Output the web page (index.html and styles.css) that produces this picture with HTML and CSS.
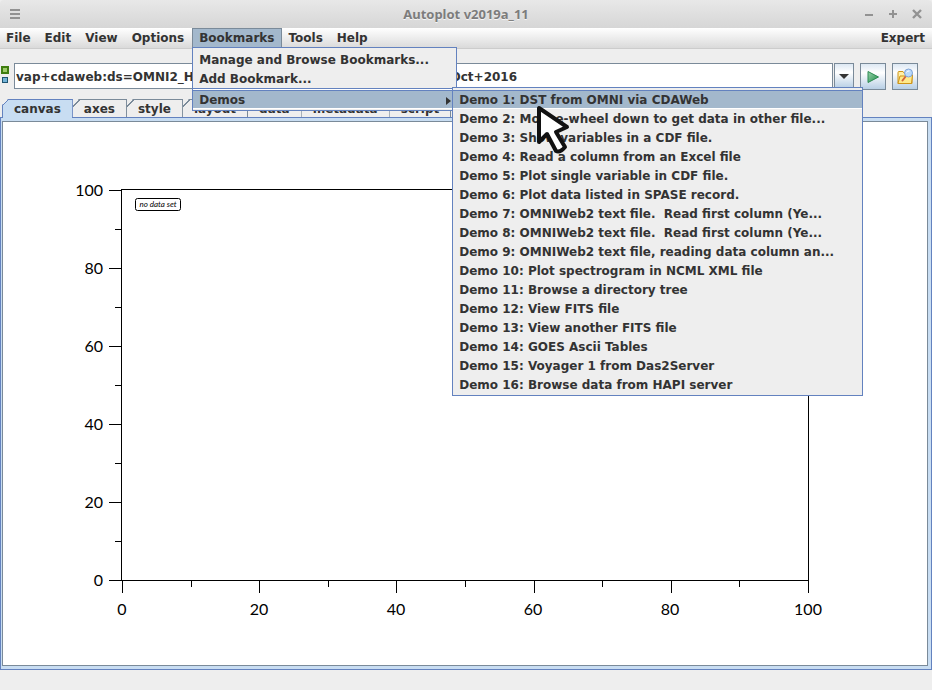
FILE: index.html
```html
<!DOCTYPE html>
<html lang="en">
<head>
    <meta charset="UTF-8">
    <meta name="viewport" content="width=device-width, initial-scale=1.0">
    <title>Autoplot v2019a_11</title>
    <link rel="stylesheet" href="styles.css">
</head>
<body>

<header class="titlebar">
    <button class="title-button" aria-label="Window menu">
        <svg width="12" height="12" viewBox="0 0 12 12"><path d="M1 2h10M1 6h10M1 10h10" stroke="#929292" stroke-width="2"/></svg>
    </button>
    <h1>Autoplot v2019a_11</h1>
    <div class="title-actions">
        <button class="title-button" aria-label="Minimize">
            <svg width="12" height="12" viewBox="0 0 12 12"><path d="M2 7h8" stroke="#929292" stroke-width="2"/></svg>
        </button>
        <button class="title-button" aria-label="Maximize">
            <svg width="12" height="12" viewBox="0 0 12 12"><path d="M2 6h8M6 2v8" stroke="#929292" stroke-width="2"/></svg>
        </button>
        <button class="title-button" aria-label="Close">
            <svg width="12" height="12" viewBox="0 0 12 12"><path d="M2 2l8 8M10 2l-8 8" stroke="#929292" stroke-width="2.4"/></svg>
        </button>
    </div>
</header>

<nav class="menubar">
    <button class="menu-button">File</button>
    <button class="menu-button">Edit</button>
    <button class="menu-button">View</button>
    <button class="menu-button">Options</button>
    <div class="menu-holder">
        <button class="menu-button open">Bookmarks</button>
        <div class="popup">
            <button class="item">Manage and Browse Bookmarks...</button>
            <button class="item">Add Bookmark...</button>
            <hr>
            <div class="submenu-holder">
                <button class="item selected">Demos
                    <svg class="arrow" width="5" height="8" viewBox="0 0 5 8"><path d="M0 0l5 4-5 4z" fill="#333"/></svg>
                </button>
                <div class="popup submenu">
                    <button class="item selected">Demo 1: DST from OMNI via CDAWeb</button>
                    <button class="item">Demo 2: Mouse-wheel down to get data in other file...</button>
                    <button class="item">Demo 3: Show variables in a CDF file.</button>
                    <button class="item">Demo 4: Read a column from an Excel file</button>
                    <button class="item">Demo 5: Plot single variable in CDF file.</button>
                    <button class="item">Demo 6: Plot data listed in SPASE record.</button>
                    <button class="item">Demo 7: OMNIWeb2 text file.&nbsp; Read first column (Ye...</button>
                    <button class="item">Demo 8: OMNIWeb2 text file.&nbsp; Read first column (Ye...</button>
                    <button class="item">Demo 9: OMNIWeb2 text file, reading data column an...</button>
                    <button class="item">Demo 10: Plot spectrogram in NCML XML file</button>
                    <button class="item">Demo 11: Browse a directory tree</button>
                    <button class="item">Demo 12: View FITS file</button>
                    <button class="item">Demo 13: View another FITS file</button>
                    <button class="item">Demo 14: GOES Ascii Tables</button>
                    <button class="item">Demo 15: Voyager 1 from Das2Server</button>
                    <button class="item">Demo 16: Browse data from HAPI server</button>
                    <svg class="cursor" width="36" height="52" viewBox="0 0 36 52"><path d="M3 3V37L11 29L20 46Q24 48 29 42L20 27L31 22Z" fill="#fff" stroke="#111" stroke-width="4" stroke-linejoin="round"/></svg>
                </div>
            </div>
        </div>
    </div>
    <button class="menu-button">Tools</button>
    <button class="menu-button">Help</button>
    <button class="menu-button expert">Expert</button>
</nav>

<div class="toolbar">
    <div class="source-icon">
        <span class="square green"></span>
        <span class="square blue"></span>
    </div>
    <input class="address" type="text" aria-label="Data address" value="vap+cdaweb:ds=OMNI2_H0_MRG1HR&amp;id=DST1800&amp;timerange=Oct+2016">
    <button class="tool-button recent" aria-label="Recent addresses">
        <svg width="10" height="5" viewBox="0 0 10 5"><path d="M0 0h10L5 5z" fill="#333"/></svg>
    </button>
    <button class="tool-button" aria-label="Plot">
        <svg width="16" height="16" viewBox="0 0 16 16">
            <defs><linearGradient id="go" x1="0" y1="0" x2="1" y2="1"><stop offset="0" stop-color="#9bd3ad"/><stop offset="1" stop-color="#1d8c48"/></linearGradient></defs>
            <path d="M3 2.500L13.500 8L3 13.500z" fill="url(#go)" stroke="#2c8b52" stroke-linejoin="round"/>
        </svg>
    </button>
    <button class="tool-button" aria-label="Inspect file">
        <svg width="18" height="18" viewBox="0 0 18 18">
            <path d="M2 15.500V4.500q0-1 1-1h4l1.500 2H15q1 0 1 1v9z" fill="#fff0a8" stroke="#cf9418"/>
            <path d="M2 15.500L4 8h5l1-1h6.500l-1 8.500z" fill="#ffe98a" stroke="#cf9418"/>
            <path d="M10 8L6.500 12.500" stroke="#d3643b" stroke-width="2" stroke-linecap="round"/>
            <circle cx="12.500" cy="5" r="4" fill="#b9dafa" stroke="#7fa3d6"/>
            <path d="M10.500 4.500q1-2 3-1.500" fill="none" stroke="#fff"/>
        </svg>
    </button>
</div>

<div class="tabs" role="tablist">
    <button class="tab active" role="tab">canvas</button>
    <button class="tab" role="tab">axes</button>
    <button class="tab" role="tab">style</button>
    <button class="tab" role="tab">layout</button>
    <button class="tab" role="tab">data</button>
    <button class="tab" role="tab">metadata</button>
    <button class="tab" role="tab">script</button>
</div>

<main class="panel">
    <div class="canvas">
        <svg class="plot" width="924" height="540" viewBox="3 122 924 540">
            <g fill="none" stroke="#000" shape-rendering="crispEdges">
                <path d="M121.500 189.500H808.500V580.500H121.500Z"/>
                <path d="M109 190.500h12M109 268.500h12M109 346.500h12M109 424.500h12M109 502.500h12M109 580.500h12"/>
                <path d="M115 229.500h6M115 307.500h6M115 385.500h6M115 463.500h6M115 541.500h6"/>
                <path d="M122.500 581v12M259.500 581v12M396.500 581v12M534.500 581v12M671.500 581v12M808.500 581v12"/>
                <path d="M191.500 581v6M328.500 581v6M465.500 581v6M602.500 581v6M739.500 581v6"/>
            </g>
            <g class="labels y-labels">
                <text x="103" y="196">100</text>
                <text x="103" y="274">80</text>
                <text x="103" y="352">60</text>
                <text x="103" y="430">40</text>
                <text x="103" y="508">20</text>
                <text x="103" y="586">0</text>
            </g>
            <g class="labels x-labels">
                <text x="122" y="615">0</text>
                <text x="259" y="615">20</text>
                <text x="396" y="615">40</text>
                <text x="533" y="615">60</text>
                <text x="670" y="615">80</text>
                <text x="808" y="615">100</text>
            </g>
            <rect x="135.500" y="198.500" width="45" height="12" rx="2" fill="#fff" stroke="#000"/>
            <text class="message" x="158" y="207">no data set</text>
        </svg>
    </div>
</main>

<footer class="statusbar"></footer>

</body>
</html>
```
FILE: styles.css
```css
* {
    box-sizing: border-box;
}
body {
    margin: 0;
    height: 100vh;
    display: flex;
    flex-direction: column;
    overflow: hidden;
    background: #eee;
    color: #333;
    font: bold 12px/19px "DejaVu Sans", sans-serif;
}
button {
    margin: 0;
    padding: 0;
    border: 0;
    background: none;
    color: inherit;
    font: inherit;
}
svg {
    display: block;
}
.titlebar {
    flex: none;
    display: flex;
    align-items: center;
    justify-content: space-between;
    height: 28px;
    padding: 0 9px;
    background: linear-gradient(#e8e8e8, #d6d6d6);
    border-radius: 4px 4px 0 0;
}
.titlebar h1 {
    flex: 1;
    margin: 0 0 0 48px;
    text-align: center;
    color: #7c7c7c;
    font: bold 13px/28px "Noto Sans", sans-serif;
    text-shadow: 0 1px #f4f4f4;
}
.title-actions {
    display: flex;
    gap: 12px;
}
.menubar {
    flex: none;
    display: flex;
    height: 21px;
    background: linear-gradient(#fff, #dadada);
    border-bottom: 1px solid #ccc;
}
.menu-button {
    height: 19px;
    padding: 0 7px 0 6px;
    border: 1px solid transparent;
    border-width: 1px 1px 0 0;
    line-height: 18px;
}
.menu-button.open {
    background: #a3b8cc;
    border-color: #7a8a99;
    border-left-width: 1px;
}
.menu-holder {
    position: relative;
}
.expert {
    margin-left: auto;
    padding-right: 6px;
}
.popup {
    position: absolute;
    top: 19px;
    left: 0;
    z-index: 5;
    width: 265px;
    padding: 2px 0 1px;
    background: #eee;
    border: 1px solid #6382bf;
}
.item {
    display: flex;
    align-items: center;
    justify-content: space-between;
    width: 100%;
    height: 19px;
    padding: 2px 5px 0 6px;
    line-height: 17px;
    text-align: left;
    white-space: nowrap;
}
.item.selected {
    background: #a3b8cc;
    border-top: 1px solid #6382bf;
    border-bottom: 1px solid #fff;
}
.popup hr {
    height: 2px;
    margin: 0;
    border: 0;
    border-top: 1px solid #6382bf;
    background: #fff;
}
.submenu-holder {
    position: relative;
}
.submenu {
    top: -3px;
    left: 259px;
    width: 411px;
}
.cursor {
    position: absolute;
    top: 17px;
    left: 83px;
}
.toolbar {
    flex: none;
    display: flex;
    align-items: flex-start;
    padding: 14px 14px 9px 1px;
}
.source-icon {
    display: flex;
    flex-direction: column;
    align-items: center;
    gap: 3px;
    width: 8px;
    margin: 3px 5px 0 0;
}
.square {
    width: 8px;
    height: 8px;
    background: #9dcb6b;
    border: 2px solid #3f7d10;
}
.square.blue {
    width: 6px;
    height: 6px;
    background: #74b4d8;
    border: 1px solid #1e5470;
}
.address {
    flex: 1;
    min-width: 0;
    height: 26px;
    padding: 2px 1px 0;
    border: 1px solid #7a8a99;
    background: #fff;
    color: #333;
    font: bold 12px "DejaVu Sans", sans-serif;
}
.tool-button {
    display: flex;
    align-items: center;
    justify-content: center;
    width: 26px;
    height: 27px;
    margin-left: 6px;
    border: 1px solid #7a8a99;
    background: linear-gradient(#dde8f3, #fff 35%, #b8cfe5);
}
.tool-button.recent {
    width: 20px;
    height: 26px;
    margin-left: 1px;
}
.tabs {
    flex: none;
    display: flex;
    height: 18px;
    padding-left: 2px;
}
.tab {
    position: relative;
    padding: 1px 11px 0;
    border-top: 1px solid #7a8a99;
    border-right: 1px solid #7a8a99;
    background: linear-gradient(135deg, transparent 4px, #7a8a99 4px, #7a8a99 5px, #eee 5px);
    clip-path: polygon(6px 0, 100% 0, 100% 100%, 0 100%, 0 6px);
    line-height: 17px;
}
.tab.active {
    height: 19px;
    z-index: 1;
    border-color: #6382bf;
    border-left: 1px solid #6382bf;
    background: linear-gradient(135deg, transparent 3px, #6382bf 3px, #6382bf 4px, #c8ddf2 4px);
}
.panel {
    flex: 1;
    display: flex;
    min-height: 0;
    padding: 3px;
    padding-left: 1px;
    border: 1px solid #6382bf;
    background: #c8ddf2;
}
.canvas {
    flex: 1;
    min-width: 0;
    overflow: hidden;
    border: 1px solid #7a8a99;
    background: #fff;
}
.labels {
    font: 16px Lato, sans-serif;
    fill: #000;
}
.y-labels {
    text-anchor: end;
}
.x-labels {
    text-anchor: middle;
}
.message {
    font: italic 8px Lato, sans-serif;
    text-anchor: middle;
    fill: #000;
}
.statusbar {
    flex: none;
    height: 20px;
}
```
